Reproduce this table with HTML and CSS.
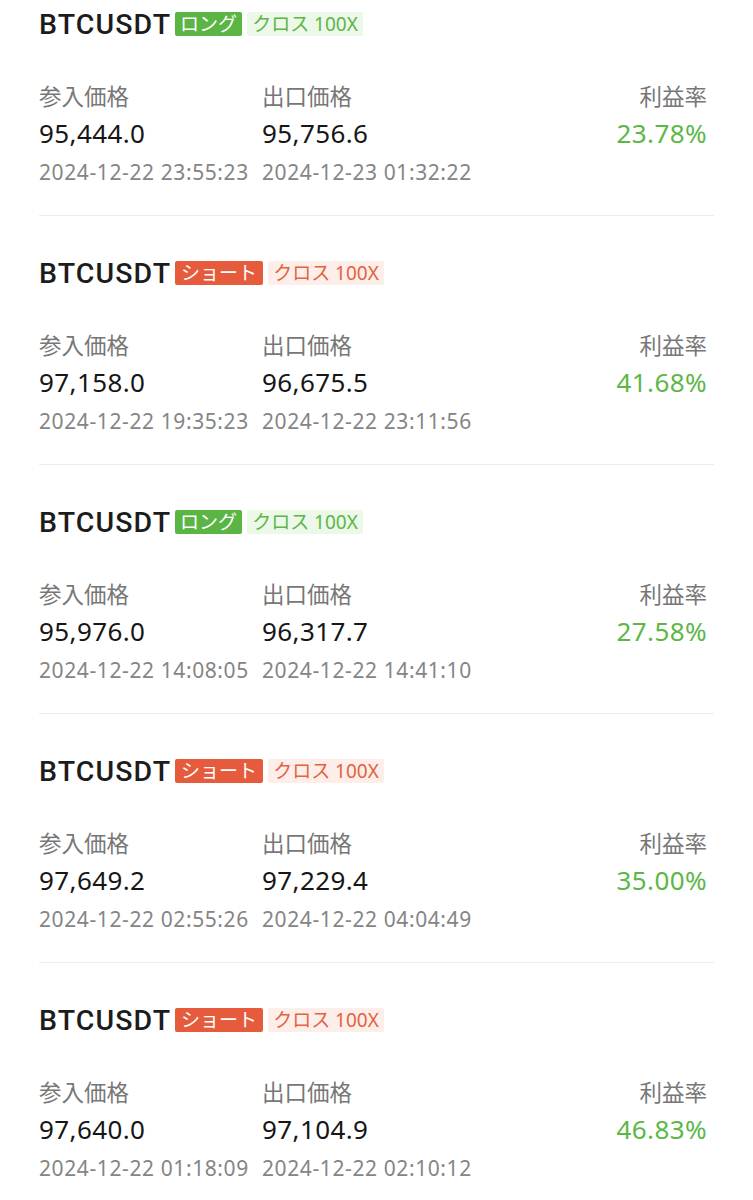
FILE: index.html
```html
<!DOCTYPE html>
<html lang="ja">
<head>
<meta charset="utf-8">
<link rel="stylesheet" href="styles.css">
</head>
<body>
<div class="list">
  <div class="card">
    <div class="head"><span class="sym">BTCUSDT</span><span class="badge long">ロング</span><span class="tag long">クロス 100X</span></div>
    <div class="grid">
      <div class="lbl">参入価格</div><div class="lbl">出口価格</div><div class="lbl r">利益率</div>
      <div class="val">95,444.0</div><div class="val">95,756.6</div><div class="val r pct">23.78%</div>
      <div class="date">2024-12-22 23:55:23</div><div class="date">2024-12-23 01:32:22</div><div></div>
    </div>
  </div>
  <div class="card">
    <div class="head"><span class="sym">BTCUSDT</span><span class="badge short">ショート</span><span class="tag short">クロス 100X</span></div>
    <div class="grid">
      <div class="lbl">参入価格</div><div class="lbl">出口価格</div><div class="lbl r">利益率</div>
      <div class="val">97,158.0</div><div class="val">96,675.5</div><div class="val r pct">41.68%</div>
      <div class="date">2024-12-22 19:35:23</div><div class="date">2024-12-22 23:11:56</div><div></div>
    </div>
  </div>
  <div class="card">
    <div class="head"><span class="sym">BTCUSDT</span><span class="badge long">ロング</span><span class="tag long">クロス 100X</span></div>
    <div class="grid">
      <div class="lbl">参入価格</div><div class="lbl">出口価格</div><div class="lbl r">利益率</div>
      <div class="val">95,976.0</div><div class="val">96,317.7</div><div class="val r pct">27.58%</div>
      <div class="date">2024-12-22 14:08:05</div><div class="date">2024-12-22 14:41:10</div><div></div>
    </div>
  </div>
  <div class="card">
    <div class="head"><span class="sym">BTCUSDT</span><span class="badge short">ショート</span><span class="tag short">クロス 100X</span></div>
    <div class="grid">
      <div class="lbl">参入価格</div><div class="lbl">出口価格</div><div class="lbl r">利益率</div>
      <div class="val">97,649.2</div><div class="val">97,229.4</div><div class="val r pct">35.00%</div>
      <div class="date">2024-12-22 02:55:26</div><div class="date">2024-12-22 04:04:49</div><div></div>
    </div>
  </div>
  <div class="card">
    <div class="head"><span class="sym">BTCUSDT</span><span class="badge short">ショート</span><span class="tag short">クロス 100X</span></div>
    <div class="grid">
      <div class="lbl">参入価格</div><div class="lbl">出口価格</div><div class="lbl r">利益率</div>
      <div class="val">97,640.0</div><div class="val">97,104.9</div><div class="val r pct">46.83%</div>
      <div class="date">2024-12-22 01:18:09</div><div class="date">2024-12-22 02:10:12</div><div></div>
    </div>
  </div>
</div>
</body>
</html>
```

FILE: styles.css
```css
html, body {
  margin: 0;
  padding: 0;
  background: #ffffff;
}
body {
  font-family: "Noto Sans", "Noto Sans CJK JP", sans-serif;
  color: #1a1a1a;
}
.list {
  padding: 0 39px;
}
.card {
  border-bottom: 1px solid #ececec;
  padding-bottom: 29px;
  margin-bottom: 33px;
}
.head {
  height: 48px;
  display: flex;
  align-items: center;
}
.sym {
  font-family: "Roboto", sans-serif;
  font-weight: 500;
  font-size: 28.5px;
  letter-spacing: 1.1px;
  color: #1c1c1c;
  margin-right: 4px;
}
.badge, .tag {
  height: 24px;
  line-height: 24px;
  font-size: 19px;
  border-radius: 2px;
  padding: 0 5px;
  font-family: "Noto Sans", "Noto Sans CJK JP", sans-serif;
}
.badge {
  color: #ffffff;
  margin-right: 5px;
}
.badge.long { background: #5bb545; padding: 0 5px; }
.badge.short { background: #e65b3b; padding: 0 6px; }
.tag.long { background: #ecf8e8; color: #5db648; }
.tag.short { background: #fdeeea; color: #e4623f; }
.grid {
  display: grid;
  grid-template-columns: 223px 1fr auto;
  padding-top: 34px;
  padding-right: 7px;
}
.lbl {
  font-size: 22.5px;
  line-height: 30px;
  color: #777777;
}
.val {
  font-size: 26px;
  line-height: 36px;
  margin-top: 3px;
  color: #161616;
  letter-spacing: 0.4px;
}
.date {
  font-size: 21px;
  line-height: 28px;
  margin-top: 7px;
  color: #858585;
  letter-spacing: 0.6px;
}
.r { text-align: right; }
.pct { color: #5cb747; }
```
